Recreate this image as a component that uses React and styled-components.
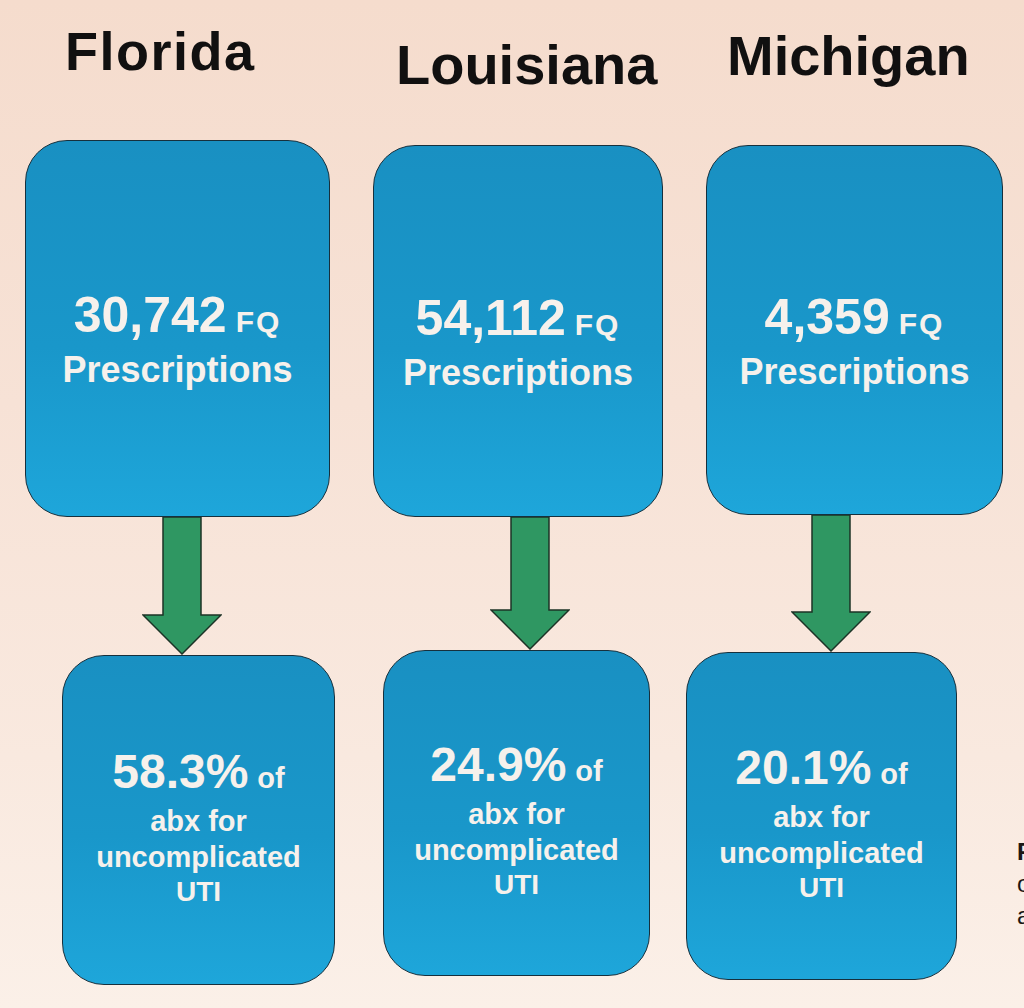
import React from 'react'
import styled, { createGlobalStyle } from 'styled-components'

const GlobalStyle = createGlobalStyle`
    html, body {
        margin: 0;
        padding: 0;
        overflow: hidden;
    }
    body {
        background: linear-gradient(180deg, #f5dccd 0%, #f7e2d6 40%, #f9e9df 75%, #fbf0e8 100%);
        font-family: "Liberation Sans", Arial, sans-serif;
        width: 1024px;
        height: 1008px;
    }
`

const Poster = styled.div`
    display: flex;
    flex-direction: row;
    align-items: flex-start;
    gap: 43px;
    padding-left: 25px;
    width: 1024px;
    height: 1008px;
    box-sizing: border-box;
    overflow: hidden;
`

const Column = styled.div`
    display: flex;
    flex-direction: column;
    align-items: flex-start;
    flex: 0 0 ${p => p.$width}px;
    width: ${p => p.$width}px;
`

const Header = styled.div`
    height: ${p => p.$height}px;
`

const Title = styled.h1`
    margin: ${p => p.$top}px 0 0 ${p => p.$left}px;
    font-size: ${p => p.$size}px;
    line-height: ${p => p.$size}px;
    letter-spacing: ${p => p.$spacing || 0}px;
    font-weight: 700;
    color: #111010;
    white-space: nowrap;
`

const Box = styled.div`
    box-sizing: border-box;
    width: ${p => p.$width}px;
    height: ${p => p.$height}px;
    margin-left: ${p => p.$left || 0}px;
    padding-top: ${p => p.$padTop}px;
    border: 1.5px solid #16303d;
    border-radius: 42px;
    background: linear-gradient(180deg, #1990c2 0%, #1997ca 55%, #1ea6da 100%);
    display: flex;
    flex-direction: column;
    align-items: center;
    justify-content: center;
    color: #f6f1ec;
    font-weight: 700;
    text-align: center;
`

const BigLine = styled.div`
    font-size: ${p => p.$size}px;
    line-height: ${p => p.$line}px;
    white-space: nowrap;
    small {
        font-size: ${p => p.$small}px;
        letter-spacing: ${p => p.$smallSpacing || 0}px;
        margin-left: 9px;
    }
`

const TextLine = styled.div`
    font-size: ${p => p.$size}px;
    line-height: ${p => p.$line}px;
    white-space: nowrap;
`

const ArrowWrap = styled.div`
    margin-left: ${p => p.$left}px;
    height: ${p => p.$height}px;
    svg {
        display: block;
    }
`

const SideNote = styled.div`
    flex: 0 0 200px;
    margin-left: -29px;
    padding-top: 836px;
    color: #1a1716;
    font-size: 24px;
    line-height: 32px;
    white-space: nowrap;
    strong {
        display: block;
        font-weight: 700;
    }
`

const DownArrow = ({ height }) => (
    <svg width="80" height={height} viewBox={`0 0 80 ${height}`}>
        <path
            d={`M21 0 L59 0 L59 ${height - 40} L79 ${height - 40} L40 ${height - 1} L1 ${height - 40} L21 ${height - 40} Z`}
            fill="#2f9762"
            stroke="#1c3326"
            strokeWidth="1.5"
        />
    </svg>
)

const states = [
    {
        name: 'Florida',
        width: 305,
        title: { top: 24, left: 40, size: 54, spacing: 1.5 },
        boxTop: 140,
        topHeight: 377,
        count: '30,742',
        arrowLeft: 117,
        arrowHeight: 138,
        bottomLeft: 37,
        bottomWidth: 273,
        bottomHeight: 330,
        percent: '58.3%',
    },
    {
        name: 'Louisiana',
        width: 290,
        title: { top: 37, left: 23, size: 56, spacing: 0 },
        boxTop: 145,
        topHeight: 372,
        count: '54,112',
        arrowLeft: 117,
        arrowHeight: 133,
        bottomLeft: 10,
        bottomWidth: 267,
        bottomHeight: 326,
        percent: '24.9%',
    },
    {
        name: 'Michigan',
        width: 297,
        title: { top: 28, left: 21, size: 56, spacing: 0 },
        boxTop: 145,
        topHeight: 370,
        count: '4,359',
        arrowLeft: 85,
        arrowHeight: 137,
        bottomLeft: -20,
        bottomWidth: 271,
        bottomHeight: 328,
        percent: '20.1%',
    },
]

const StateColumn = ({ state }) => (
    <Column $width={state.width}>
        <Header $height={state.boxTop}>
            <Title
                $top={state.title.top}
                $left={state.title.left}
                $size={state.title.size}
                $spacing={state.title.spacing}
            >
                {state.name}
            </Title>
        </Header>
        <Box $width={state.width} $height={state.topHeight} $padTop={24}>
            <BigLine $size={50} $line={52} $small={30} $smallSpacing={2}>
                {state.count}<small>FQ</small>
            </BigLine>
            <TextLine $size={36} $line={44}>Prescriptions</TextLine>
        </Box>
        <ArrowWrap $left={state.arrowLeft} $height={state.arrowHeight}>
            <DownArrow height={state.arrowHeight} />
        </ArrowWrap>
        <Box
            $width={state.bottomWidth}
            $height={state.bottomHeight}
            $left={state.bottomLeft}
            $padTop={16}
        >
            <BigLine $size={48} $line={50} $small={29}>
                {state.percent}<small>of</small>
            </BigLine>
            <TextLine $size={29} $line={36}>abx for</TextLine>
            <TextLine $size={29} $line={36}>uncomplicated</TextLine>
            <TextLine $size={28} $line={34}>UTI</TextLine>
        </Box>
    </Column>
)

export default function App() {
    return (
        <>
            <GlobalStyle />
            <Poster>
                {states.map(state => (
                    <StateColumn key={state.name} state={state} />
                ))}
                <SideNote>
                    <strong>FQ</strong>
                    <div>of all</div>
                    <div>abx</div>
                </SideNote>
            </Poster>
        </>
    )
}
